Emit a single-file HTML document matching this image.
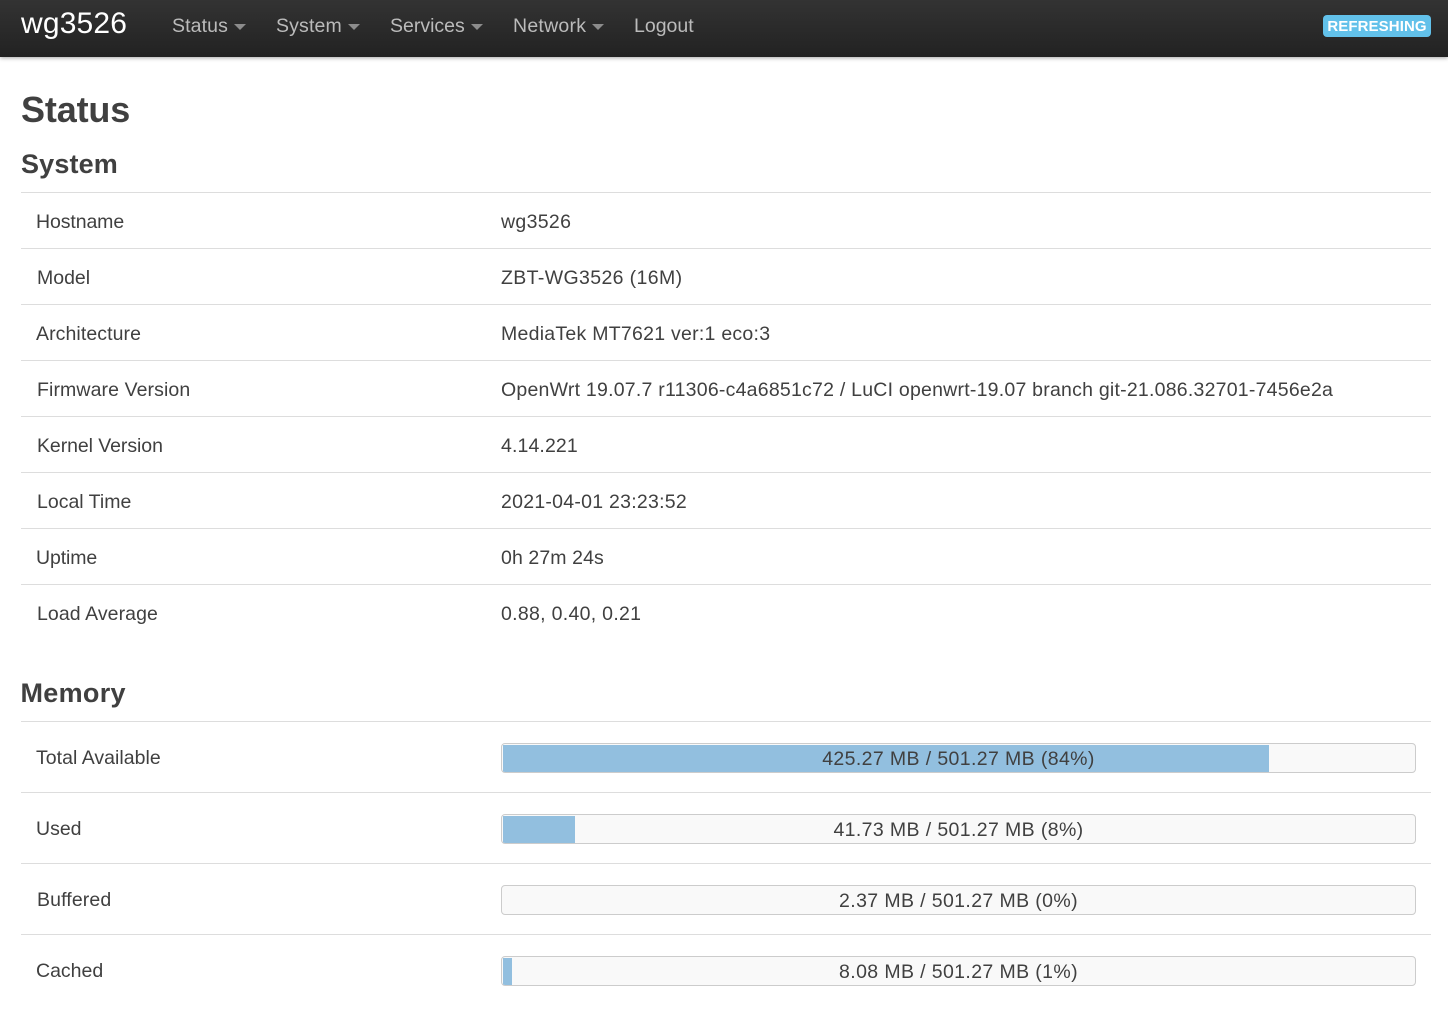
<!DOCTYPE html>
<html><head><meta charset="utf-8"><style>
html,body{margin:0;padding:0;background:#fff}
body{width:1448px;height:1029px;position:relative;overflow:hidden;font-family:"Liberation Sans",Arial,sans-serif;color:#404040;font-size:19.5px}
.t{position:absolute;white-space:nowrap;line-height:28px}
#nav{position:absolute;left:0;top:0;width:1448px;height:57px;background:linear-gradient(#333,#222);box-shadow:0 1px 4px rgba(0,0,0,.35)}
.n{color:#bbb;top:12px}
.c{position:absolute;top:24px;width:0;height:0;border-left:6px solid transparent;border-right:6px solid transparent;border-top:6px solid #8c8c8c}
.l{position:absolute;left:21px;width:1410px;height:1px;background:#ddd}
.h{font-weight:bold;font-size:27px;line-height:32px}
.b{position:absolute;left:501px;width:913px;height:28px;border:1px solid #ccc;border-radius:4px;background:#f9f9f9;box-sizing:content-box;text-align:center;line-height:30px;overflow:hidden;letter-spacing:.38px}
.b i{position:absolute;left:1px;top:1px;height:27px;background:#92bfdf}
.b span{position:relative}
</style></head><body>
<div id="nav"></div>
<div class="t" style="left:21px;top:9px;font-size:30px;line-height:30px;color:#fff;letter-spacing:.17px">wg3526</div>
<div class="t n" style="left:172px;letter-spacing:.12px">Status</div><div class="c" style="left:234px"></div>
<div class="t n" style="left:276px;letter-spacing:.15px">System</div><div class="c" style="left:348px"></div>
<div class="t n" style="left:390px">Services</div><div class="c" style="left:471px"></div>
<div class="t n" style="left:513px;letter-spacing:.25px">Network</div><div class="c" style="left:592px"></div>
<div class="t n" style="left:634px">Logout</div>
<div class="t" style="left:1323px;top:15px;width:108px;height:22px;background:#62c1ea;border-radius:4px;color:#fff;font-weight:bold;font-size:15px;line-height:23px;letter-spacing:.1px;text-align:center">REFRESHING</div>

<div class="t" style="left:21px;top:90px;font-size:36px;line-height:40px;font-weight:bold;letter-spacing:-.15px">Status</div>
<div class="t h" style="left:21px;top:148px;letter-spacing:.15px">System</div>
<div class="l" style="top:192px"></div>

<div class="t" style="left:36px;top:208px;letter-spacing:-.1px">Hostname</div><div class="t" style="left:501px;top:208px;letter-spacing:.33px">wg3526</div>
<div class="l" style="top:248px"></div>
<div class="t" style="left:37px;top:264px">Model</div><div class="t" style="left:501px;top:264px;letter-spacing:.37px">ZBT-WG3526 (16M)</div>
<div class="l" style="top:304px"></div>
<div class="t" style="left:36px;top:320px;letter-spacing:.08px">Architecture</div><div class="t" style="left:501px;top:320px;letter-spacing:.26px">MediaTek MT7621 ver:1 eco:3</div>
<div class="l" style="top:360px"></div>
<div class="t" style="left:37px;top:376px;letter-spacing:.1px">Firmware Version</div><div class="t" style="left:501px;top:376px;letter-spacing:.23px">OpenWrt 19.07.7 r11306-c4a6851c72 / LuCI openwrt-19.07 branch git-21.086.32701-7456e2a</div>
<div class="l" style="top:416px"></div>
<div class="t" style="left:37px;top:432px;letter-spacing:-.07px">Kernel Version</div><div class="t" style="left:501px;top:432px;letter-spacing:.12px">4.14.221</div>
<div class="l" style="top:472px"></div>
<div class="t" style="left:37px;top:488px">Local Time</div><div class="t" style="left:501px;top:488px;letter-spacing:.26px">2021-04-01 23:23:52</div>
<div class="l" style="top:528px"></div>
<div class="t" style="left:36px;top:544px;letter-spacing:-.1px">Uptime</div><div class="t" style="left:501px;top:544px;letter-spacing:.1px">0h 27m 24s</div>
<div class="l" style="top:584px"></div>
<div class="t" style="left:37px;top:600px;letter-spacing:.08px">Load Average</div><div class="t" style="left:501px;top:600px;letter-spacing:.3px">0.88, 0.40, 0.21</div>

<div class="t h" style="left:20.5px;top:677px;letter-spacing:.3px">Memory</div>
<div class="l" style="top:721px"></div>

<div class="t" style="left:36px;top:744px;letter-spacing:.03px">Total Available</div>
<div class="b" style="top:743px"><i style="width:766px"></i><span>425.27 MB / 501.27 MB (84%)</span></div>
<div class="l" style="top:792px"></div>
<div class="t" style="left:36px;top:815px">Used</div>
<div class="b" style="top:814px"><i style="width:72px"></i><span>41.73 MB / 501.27 MB (8%)</span></div>
<div class="l" style="top:863px"></div>
<div class="t" style="left:37px;top:886px;letter-spacing:.12px">Buffered</div>
<div class="b" style="top:885px"><span>2.37 MB / 501.27 MB (0%)</span></div>
<div class="l" style="top:934px"></div>
<div class="t" style="left:36px;top:957px">Cached</div>
<div class="b" style="top:956px"><i style="width:9px"></i><span>8.08 MB / 501.27 MB (1%)</span></div>
</body></html>
